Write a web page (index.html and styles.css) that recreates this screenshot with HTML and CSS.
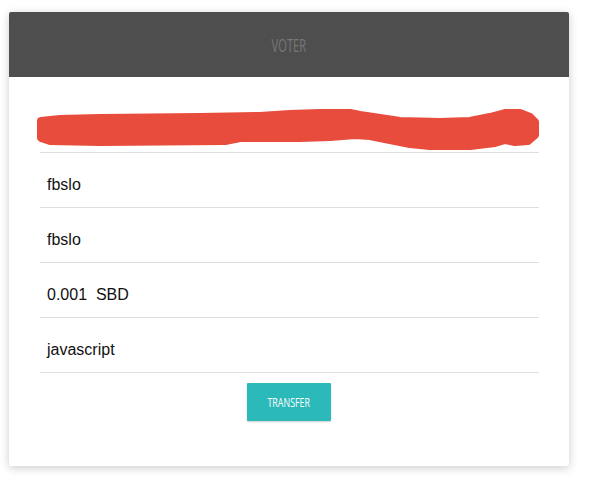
FILE: index.html
```html
<!DOCTYPE html>
<html>
<head>
<meta charset="utf-8">
<link rel="stylesheet" href="styles.css">
</head>
<body>
<div class="card">
  <div class="header"><span class="title">VOTER</span></div>
  <div class="content">
    <div class="scribble-row">
      <svg class="scribble" width="520" height="50" viewBox="0 0 520 50">
        <path d="M11 14 L30 12 L70 11 L170 10 L230 9 L260 7 L290 6 L320 6 L330 8 L350 11 L370 14 L410 15 L440 14 L460 10 L475 6 L490 6 L500 10 L505 15 L505 28 L498 34 L485 35 L475 33 L465 36 L440 39 L400 39 L380 37 L360 33 L340 29 L325 28 L300 30 L270 31 L210 31 L195 34 L70 35 L20 34 L11 31 Z" fill="#e74c3c" stroke="#e74c3c" stroke-width="8" stroke-linejoin="round"/>
      </svg>
    </div>
    <div class="row">fbslo</div>
    <div class="row">fbslo</div>
    <div class="row">0.001&nbsp; SBD</div>
    <div class="row">javascript</div>
    <div class="actions"><button class="btn"><span class="btn-label">TRANSFER</span></button></div>
  </div>
</div>
</body>
</html>
```
FILE: styles.css
```css
html, body {
  margin: 0;
  background: #ffffff;
}
body {
  padding: 12px 21px 20px 9px;
}
.card {
  background: #fff;
  box-shadow: 0 2px 10px rgba(0,0,0,0.2);
  border-radius: 2px;
  overflow: hidden;
}
.header {
  height: 65px;
  background: #4e4e4e;
  display: flex;
  align-items: center;
  justify-content: center;
}
.title {
  display: inline-block;
  font-family: "Open Sans", sans-serif;
  font-weight: 400;
  font-size: 18px;
  color: #787878;
  transform: scaleX(0.62);
  margin-top: 1px;
}
.content {
  padding: 0 30px 45px 31px;
}
.scribble-row {
  height: 75px;
  border-bottom: 1px solid #dedede;
  position: relative;
}
.scribble {
  position: absolute;
  left: -10px;
  top: 30px;
}
.row {
  height: 55px;
  border-bottom: 1px solid #dedede;
  font-family: "Liberation Sans", Arial, sans-serif;
  font-size: 16px;
  color: #111;
  padding-left: 7px;
  padding-top: 10px;
  display: flex;
  align-items: center;
  box-sizing: border-box;
}
.actions {
  display: flex;
  justify-content: center;
  padding-top: 10px;
}
.btn {
  width: 84px;
  height: 38px;
  margin-right: 1px;
  background: #2bb9b9;
  border: none;
  border-radius: 1px;
  color: #fff;
  box-shadow: 0 1px 2px rgba(0,0,0,0.2);
  padding: 0;
}
.btn-label {
  display: inline-block;
  font-family: "Open Sans", sans-serif;
  font-size: 12px;
  transform: scaleX(0.74);
}
```
